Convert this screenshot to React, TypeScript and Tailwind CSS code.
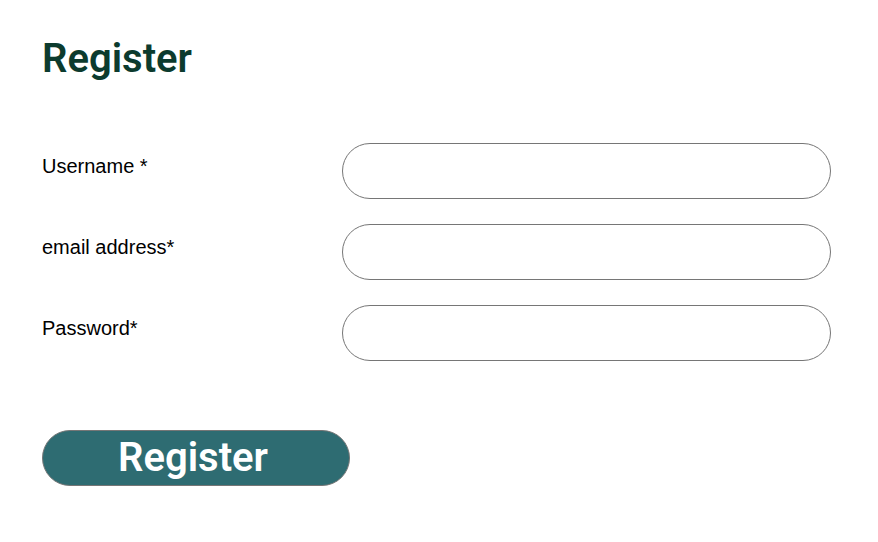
const fields = [
  { id: "username", label: "Username *", type: "text" },
  { id: "email", label: "email address*", type: "email" },
  { id: "password", label: "Password*", type: "password" },
];

export default function App() {
  return (
    <main className="min-h-screen bg-white py-9 pr-[47px] pl-[42px] font-['Liberation_Sans',Arial,sans-serif]">
      <h1 className="font-['Roboto',sans-serif] text-[40px] leading-[46px] font-semibold text-[#0c3b2e]">
        Register
      </h1>
      <form className="mt-[61px]">
        <div className="flex flex-col gap-[25px]">
          {fields.map((field) => (
            <div key={field.id} className="flex items-start">
              <label htmlFor={field.id} className="w-[300px] shrink-0 pt-[11px] text-xl leading-6 text-black">
                {field.label}
              </label>
              <input
                id={field.id}
                name={field.id}
                type={field.type}
                className="h-14 min-w-0 flex-1 rounded-full border border-[#767676] bg-white px-6 text-xl"
              />
            </div>
          ))}
        </div>
        <button
          type="button"
          className="mt-[69px] flex h-14 w-[308px] items-center justify-center rounded-full border border-[#767676] bg-[#2e6c72] pr-1.5 font-['Roboto',sans-serif] text-[40px] leading-[46px] font-semibold text-white"
        >
          Register
        </button>
      </form>
    </main>
  );
}
